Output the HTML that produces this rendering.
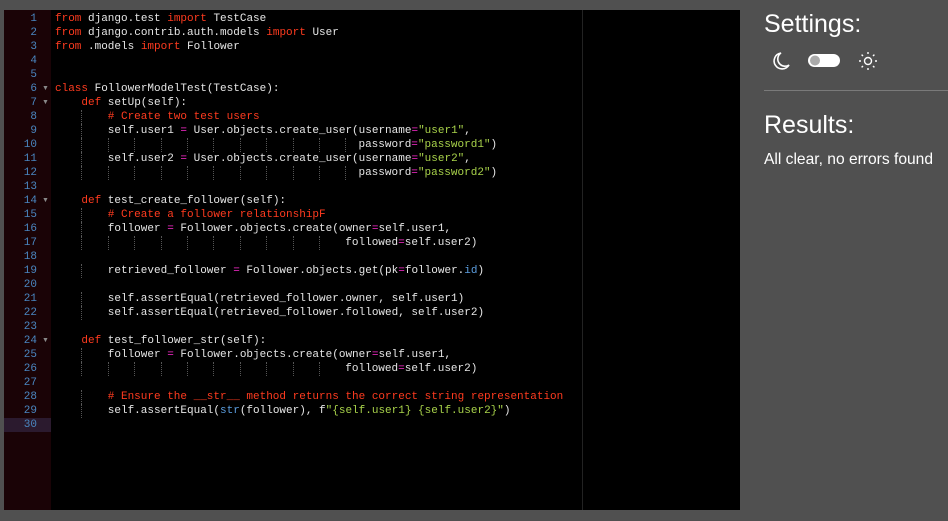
<!DOCTYPE html>
<html><head><meta charset="utf-8"><style>
body{margin:0;width:948px;height:521px;background:#505050;overflow:hidden;position:relative;font-family:"Liberation Sans",sans-serif}
#ed{position:absolute;left:4px;top:10px;width:736px;height:500px;background:#000;overflow:hidden}
#gut{position:absolute;left:0;top:0;width:47px;height:500px;background:#1a0306}
#pm{position:absolute;left:578px;top:0;width:1px;height:500px;background:#222}
.ln{position:absolute;left:0;width:33px;text-align:right;font:11px/14px "Liberation Mono",monospace;color:#4a86c0;margin-top:2px}
.act{position:absolute;left:0;width:47px;height:14px;top:408px;background:#2b1a2e}
.code{position:absolute;left:51px;top:2px;font:11px/14px "Liberation Mono",monospace;color:#e6e6e6}
.code div{height:14px;white-space:pre}
.k{color:#ff3b1f}.o{color:#ff2bd0}.s{color:#a8d24a}.c{color:#ff3b1f}.b{color:#5c9ee0}
i{display:inline-block;width:26.4px;height:14px;vertical-align:top;font-style:normal}
i.g{border-left:1px dotted #555;box-sizing:border-box}
i.h{width:13.2px}
.fold{position:absolute;left:38px;font-size:7px;line-height:14px;color:#888;margin-top:2px}
#side{position:absolute;left:764px;top:0;color:#fff}
</style></head><body>
<div id="ed">
<div id="gut"></div><div class="act"></div><div id="pm"></div>
<div class="ln" style="top:0">1</div><div class="ln" style="top:14px">2</div><div class="ln" style="top:28px">3</div><div class="ln" style="top:42px">4</div><div class="ln" style="top:56px">5</div><div class="ln" style="top:70px">6</div><div class="ln" style="top:84px">7</div><div class="ln" style="top:98px">8</div><div class="ln" style="top:112px">9</div><div class="ln" style="top:126px">10</div><div class="ln" style="top:140px">11</div><div class="ln" style="top:154px">12</div><div class="ln" style="top:168px">13</div><div class="ln" style="top:182px">14</div><div class="ln" style="top:196px">15</div><div class="ln" style="top:210px">16</div><div class="ln" style="top:224px">17</div><div class="ln" style="top:238px">18</div><div class="ln" style="top:252px">19</div><div class="ln" style="top:266px">20</div><div class="ln" style="top:280px">21</div><div class="ln" style="top:294px">22</div><div class="ln" style="top:308px">23</div><div class="ln" style="top:322px">24</div><div class="ln" style="top:336px">25</div><div class="ln" style="top:350px">26</div><div class="ln" style="top:364px">27</div><div class="ln" style="top:378px">28</div><div class="ln" style="top:392px">29</div><div class="ln" style="top:406px">30</div>
<div class="fold" style="top:70px">▼</div><div class="fold" style="top:84px">▼</div><div class="fold" style="top:182px">▼</div><div class="fold" style="top:322px">▼</div>
<div class="code"><div><span class="k">from</span> django.test <span class="k">import</span> TestCase</div><div><span class="k">from</span> django.contrib.auth.models <span class="k">import</span> User</div><div><span class="k">from</span> .models <span class="k">import</span> Follower</div><div></div><div></div><div><span class="k">class</span> FollowerModelTest(TestCase):</div><div><i></i><span class="k">def</span> setUp(self):</div><div><i></i><i class="g"></i><span class="c"># Create two test users</span></div><div><i></i><i class="g"></i>self.user1 <span class="o">=</span> User.objects.create_user(username<span class="o">=</span><span class="s">"user1"</span>,</div><div><i></i><i class="g"></i><i class="g"></i><i class="g"></i><i class="g"></i><i class="g"></i><i class="g"></i><i class="g"></i><i class="g"></i><i class="g"></i><i class="g"></i><i class="g h"></i>password<span class="o">=</span><span class="s">"password1"</span>)</div><div><i></i><i class="g"></i>self.user2 <span class="o">=</span> User.objects.create_user(username<span class="o">=</span><span class="s">"user2"</span>,</div><div><i></i><i class="g"></i><i class="g"></i><i class="g"></i><i class="g"></i><i class="g"></i><i class="g"></i><i class="g"></i><i class="g"></i><i class="g"></i><i class="g"></i><i class="g h"></i>password<span class="o">=</span><span class="s">"password2"</span>)</div><div></div><div><i></i><span class="k">def</span> test_create_follower(self):</div><div><i></i><i class="g"></i><span class="c"># Create a follower relationshipF</span></div><div><i></i><i class="g"></i>follower <span class="o">=</span> Follower.objects.create(owner<span class="o">=</span>self.user1,</div><div><i></i><i class="g"></i><i class="g"></i><i class="g"></i><i class="g"></i><i class="g"></i><i class="g"></i><i class="g"></i><i class="g"></i><i class="g"></i><i class="g"></i>followed<span class="o">=</span>self.user2)</div><div></div><div><i></i><i class="g"></i>retrieved_follower <span class="o">=</span> Follower.objects.get(pk<span class="o">=</span>follower.<span class="b">id</span>)</div><div></div><div><i></i><i class="g"></i>self.assertEqual(retrieved_follower.owner, self.user1)</div><div><i></i><i class="g"></i>self.assertEqual(retrieved_follower.followed, self.user2)</div><div></div><div><i></i><span class="k">def</span> test_follower_str(self):</div><div><i></i><i class="g"></i>follower <span class="o">=</span> Follower.objects.create(owner<span class="o">=</span>self.user1,</div><div><i></i><i class="g"></i><i class="g"></i><i class="g"></i><i class="g"></i><i class="g"></i><i class="g"></i><i class="g"></i><i class="g"></i><i class="g"></i><i class="g"></i>followed<span class="o">=</span>self.user2)</div><div></div><div><i></i><i class="g"></i><span class="c"># Ensure the __str__ method returns the correct string representation</span></div><div><i></i><i class="g"></i>self.assertEqual(<span class="b">str</span>(follower), f<span class="s">"{self.user1} {self.user2}"</span>)</div><div></div></div>
</div>
<div id="side">
<div style="position:absolute;top:10px;left:0;font-size:25px;white-space:nowrap;font-weight:300">Settings:</div>
<svg style="position:absolute;left:4px;top:50px" width="120" height="22" viewBox="0 0 120 22">
<path d="M13 3 A8 8 0 1 0 21 15 A6.5 6.5 0 0 1 13 3 Z" fill="none" stroke="#fff" stroke-width="1.6"/>
<rect x="40" y="4" width="32" height="13" rx="6.5" fill="#fff"/>
<circle cx="47" cy="10.5" r="5" fill="#aaa"/>
<circle cx="100" cy="11" r="3.5" fill="none" stroke="#fff" stroke-width="1.4"/>
<g stroke="#fff" stroke-width="1.4"><path d="M100 2v2M100 18v2M91 11h2M107 11h2M93.6 4.6l1.4 1.4M105 16l1.4 1.4M93.6 17.4l1.4-1.4M105 6l1.4-1.4"/></g>
</svg>
<div style="position:absolute;top:90px;left:0;width:184px;height:1px;background:#7a7a7a"></div>
<div style="position:absolute;top:111px;left:0;font-size:25px;white-space:nowrap;font-weight:300">Results:</div>
<div style="position:absolute;top:151px;left:0;font-size:15.6px;white-space:nowrap">All clear, no errors found</div>
</div>
</body></html>
